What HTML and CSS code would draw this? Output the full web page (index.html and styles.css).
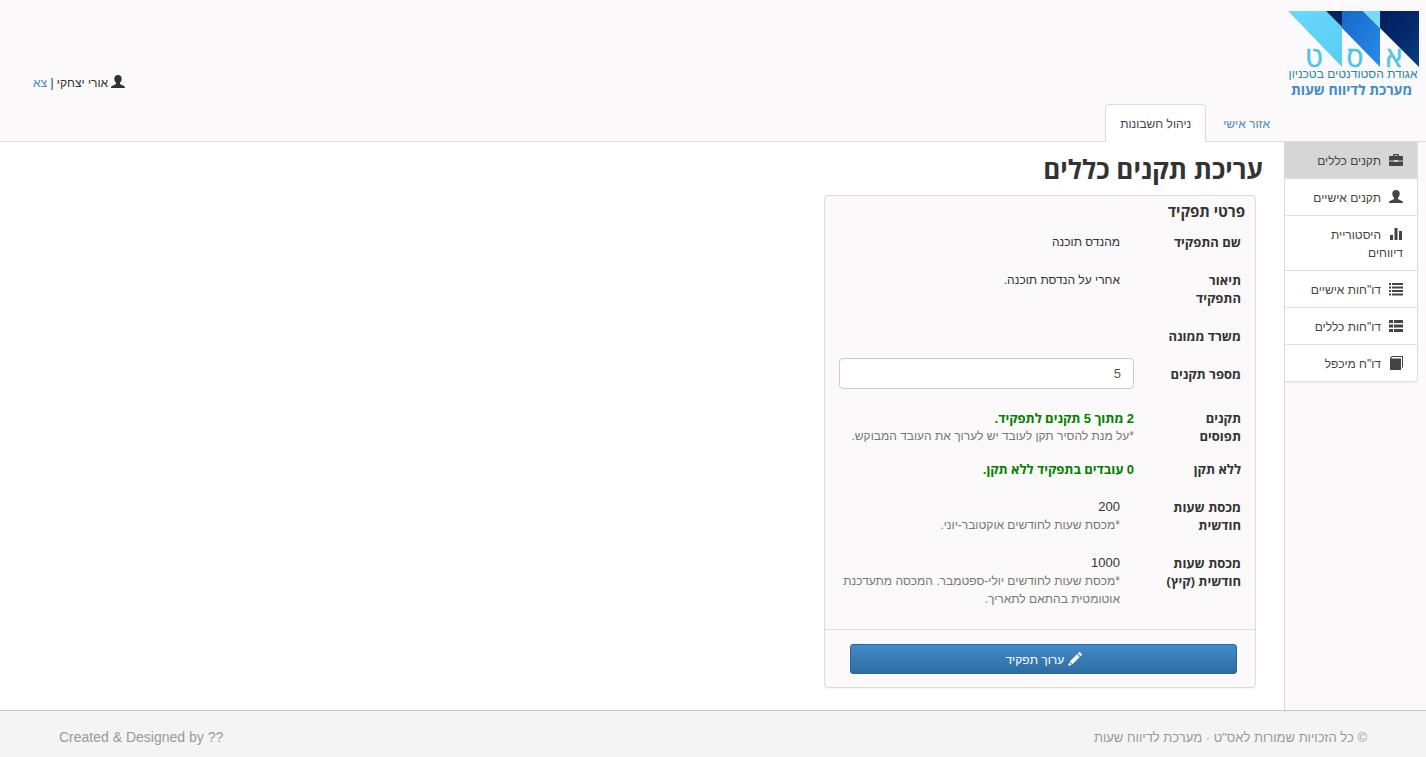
FILE: index.html
```
<!DOCTYPE html>
<html lang="he" dir="rtl">
<head>
<meta charset="utf-8">
<meta name="viewport" content="width=device-width, initial-scale=1">
<title>מערכת לדיווח שעות</title>
<link rel="stylesheet" href="styles.css">
</head>
<body>
<svg class="sprite" aria-hidden="true">
  <symbol id="i-user" viewBox="0 0 14 14"><path d="M7 0c2.200 0 3.700 1.300 3.700 3.500 0 1.900-.8 3.300-1.700 4.200v1.200c0 .5 5 1.600 5 3.300V13H0v-.8c0-1.700 5-2.800 5-3.300V7.700C4.100 6.800 3.300 5.400 3.300 3.500 3.300 1.300 4.800 0 7 0z"/></symbol>
  <symbol id="i-case" viewBox="0 0 14 14"><path d="M5 1h4q1 0 1 1v1h3q1 0 1 1v3.500H9V7H5v.5H0V4q0-1 1-1h3V2q0-1 1-1zm.3 1.200V3h3.400v-.8zM0 8.500h5V9h4v-.5h5V12q0 1-1 1H1q-1 0-1-1z"/></symbol>
  <symbol id="i-stats" viewBox="0 0 14 14"><path d="M1 8h3v5H1zM5.500 1h3v12h-3zM10 4h3v9h-3z"/></symbol>
  <symbol id="i-list" viewBox="0 0 14 14"><path d="M0 1h2v2H0zM3 1h11v2H3zM0 4.500h2v2H0zM3 4.500h11v2H3zM0 8h2v2H0zM3 8h11v2H3zM0 11.500h2v2H0zM3 11.500h11v2H3z"/></symbol>
  <symbol id="i-thlist" viewBox="0 0 14 14"><path d="M0 1h4v3H0zM5 1h9v3H5zM0 5.500h4v3H0zM5 5.500h9v3H5zM0 10h4v3H0zM5 10h9v3H5z"/></symbol>
  <symbol id="i-book" viewBox="0 0 14 14"><path d="M3 0h11v11.500h-1V1H3.500L2 2.500h10V14H1V2z"/></symbol>
  <symbol id="i-pencil" viewBox="0 0 14 14"><path d="M11 .3q.5-.5 1 0l1.700 1.700q.5.500 0 1L12.500 4.200 9.800 1.500zM9 2.300 11.700 5 4.500 12.200 1.800 9.500zM1.300 10.200l2.500 2.500L0 14z"/></symbol>
</svg>

<header class="top">
  <a class="brand" href="#">
    <svg class="brand-mark" viewBox="0 0 131 68" role="img" aria-label="אגודת הסטודנטים בטכניון">
      <defs>
        <linearGradient id="sky" x1="0" y1="0" x2="1" y2="1"><stop offset="0" stop-color="#6ad8fb"/><stop offset="1" stop-color="#57cdf3"/></linearGradient>
        <linearGradient id="mid" x1="0" y1="0" x2="1" y2="1"><stop offset="0" stop-color="#1668cc"/><stop offset="1" stop-color="#2a8be8"/></linearGradient>
        <linearGradient id="navy" x1="0" y1="0" x2="1" y2="1"><stop offset="0" stop-color="#00205c"/><stop offset=".5" stop-color="#04286c"/><stop offset="1" stop-color="#0a3f7c"/></linearGradient>
      </defs>
      <path fill="url(#sky)" d="M0 0h38l16 16v40z"/>
      <path fill="#03245f" d="M38 0h16v16z"/>
      <path fill="url(#mid)" d="M54 0h21l17 17v39L54 17z"/>
      <path fill="#78dcf8" d="M75 0h17v17z"/>
      <path fill="url(#navy)" d="M92 0h39v56L92 17z"/>
      <g class="brand-letters"><text x="106" y="56">א</text><text x="67" y="56">ס</text><text x="26" y="56">ט</text></g>
      <text class="brand-name" x="65" y="67">אגודת הסטודנטים בטכניון</text>
    </svg>
    <span class="brand-title">מערכת לדיווח שעות</span>
  </a>
  <nav class="tabs">
    <a class="tab" href="#">אזור אישי</a>
    <a class="tab tab-active" href="#">ניהול חשבונות</a>
  </nav>
  <div class="user"><svg class="icon"><use href="#i-user"/></svg> אורי יצחקי | <a href="#">צא</a></div>
</header>

<div class="page">
  <aside class="side">
    <nav class="menu">
      <a class="menu-item menu-active" href="#"><svg class="icon"><use href="#i-case"/></svg>תקנים כללים</a>
      <a class="menu-item" href="#"><svg class="icon"><use href="#i-user"/></svg>תקנים אישיים</a>
      <a class="menu-item" href="#"><svg class="icon"><use href="#i-stats"/></svg>היסטוריית דיווחים</a>
      <a class="menu-item" href="#"><svg class="icon"><use href="#i-list"/></svg>דו"חות אישיים</a>
      <a class="menu-item" href="#"><svg class="icon"><use href="#i-thlist"/></svg>דו"חות כללים</a>
      <a class="menu-item" href="#"><svg class="icon"><use href="#i-book"/></svg>דו"ח מיכפל</a>
    </nav>
  </aside>
  <main class="main">
    <h1>עריכת תקנים כללים</h1>
    <form class="panel">
      <div class="panel-body">
        <h2>פרטי תפקיד</h2>
        <div class="row"><span class="label">שם התפקיד</span><p class="value">מהנדס תוכנה</p></div>
        <div class="row"><span class="label">תיאור התפקיד</span><p class="value">אחרי על הנדסת תוכנה.</p></div>
        <div class="row"><span class="label">משרד ממונה</span><p class="value"></p></div>
        <div class="row"><label class="label" for="slots">מספר תקנים</label><input class="field" id="slots" type="text" value="5"></div>
        <div class="row row-tight"><span class="label">תקנים תפוסים</span><p class="value value-wide"><strong><span class="num">2</span> מתוך <span class="num">5</span> תקנים לתפקיד.</strong><small>*על מנת להסיר תקן לעובד יש לערוך את העובד המבוקש.</small></p></div>
        <div class="row"><span class="label">ללא תקן</span><p class="value value-wide"><strong><span class="num">0</span> עובדים בתפקיד ללא תקן.</strong></p></div>
        <div class="row"><span class="label">מכסת שעות חודשית</span><p class="value"><span class="num">200</span><small>*מכסת שעות לחודשים אוקטובר-יוני.</small></p></div>
        <div class="row"><span class="label">מכסת שעות חודשית (קיץ)</span><p class="value"><span class="num">1000</span><small>*מכסת שעות לחודשים יולי-ספטמבר. המכסה מתעדכנת אוטומטית בהתאם לתאריך.</small></p></div>
      </div>
      <div class="panel-foot">
        <button class="button" type="button"><svg class="icon"><use href="#i-pencil"/></svg> ערוך תפקיד</button>
      </div>
    </form>
  </main>
</div>

<footer class="foot">
  <span>© כל הזכויות שמורות לאס"ט · מערכת לדיווח שעות</span>
  <span class="credit" dir="ltr">Created &amp; Designed by ??</span>
</footer>
</body>
</html>
```
FILE: styles.css
```
* { box-sizing: border-box; }
body {
  display: flex;
  flex-direction: column;
  min-height: 100vh;
  margin: 0;
  background: #fff;
  color: #333;
  font: 12px/18px "Liberation Sans", sans-serif;
}
a { color: #428bca; text-decoration: none; }
h1, h2, p { margin: 0; }
h1, h2, strong, .label, .brand-title { font-family: "Open Sans", sans-serif; }
.sprite { display: none; }
.icon { width: 14px; height: 14px; fill: currentColor; vertical-align: -2px; }
.num { font-family: "Liberation Sans", sans-serif; font-size: 13px; line-height: 1; }

.top {
  display: flex;
  min-height: 142px;
  background: #fbf9fa;
  border-bottom: 1px solid #ddd;
}
.brand {
  display: flex;
  flex-direction: column;
  width: 142px;
  padding: 11px 7px 0 4px;
  text-align: center;
}
.brand-mark { width: 131px; height: 68px; overflow: visible; }
.brand-letters {
  fill: #4cc6e6;
  stroke: #4cc6e6;
  stroke-width: .5;
  font: 28px "Open Sans", sans-serif;
  text-anchor: middle;
}
.brand-name { fill: #2b86a8; font-size: 12px; text-anchor: middle; }
.brand-title { padding-right: 4px; font-size: 14px; font-weight: bold; line-height: 22px; }

.tabs { display: flex; align-items: flex-end; gap: 2px; margin-bottom: -1px; }
.tab {
  padding: 10px 14px 9px;
  border: 1px solid transparent;
  border-bottom: 0;
  border-radius: 4px 4px 0 0;
}
.tab:first-child { padding-right: 13px; }
.tab-active { background: #fff; border-color: #ddd; color: #444; }
.user { margin: 74px auto 0 33px; }

.page { display: flex; flex: 1; }
.side {
  flex: none;
  width: 142px;
  padding-right: 8px;
  background: #fbf9fa;
  border-left: 1px solid #ddd;
}
.menu {
  margin-top: -1px;
  border: 1px solid #ddd;
  border-left: 0;
  border-radius: 0 4px 4px 0;
  box-shadow: 0 1px 2px rgba(0, 0, 0, .06);
  background: #fff;
}
.menu-item { display: block; padding: 10px 14px 8px; color: #444; }
.menu-item + .menu-item { border-top: 1px solid #ddd; }
.menu-item .icon { margin-left: 8px; }
.menu-active { background: #d6d6d6; }

.main { flex: 1; padding: 9px 21px 21px; }
h1 { margin-bottom: 8px; font-size: 26px; line-height: 36px; }
.panel {
  width: 432px;
  max-width: 100%;
  margin-right: 7px;
  border: 1px solid #ddd;
  border-radius: 4px;
  background: #fbf9fa;
  box-shadow: 0 1px 1px rgba(0, 0, 0, .05);
}
.panel-body { padding: 5px 14px 8px; }
h2 { margin: 0 -4px 5px 0; font-size: 15px; line-height: 20px; }
.row {
  display: grid;
  grid-template-columns: 76px 1fr;
  column-gap: 31px;
  margin-bottom: 13px;
}
.row-tight { margin-bottom: 8px; }
.label { padding-top: 7px; font-size: 13px; font-weight: bold; }
.value { padding: 7px 14px 0 0; }
.value-wide { padding-right: 0; }
strong { display: block; color: #008000; font-size: 13px; }
small { display: block; color: #777; font-size: 12px; }
.field {
  width: 100%;
  height: 31px;
  padding: 4px 12px;
  border: 1px solid #ccc;
  border-radius: 4px;
  background: #fff;
  color: #555;
  font: 13px "Liberation Sans", sans-serif;
}
.panel-foot { padding: 14px 18px 13px 25px; border-top: 1px solid #ddd; }
.button {
  display: block;
  width: 100%;
  height: 30px;
  padding: 0;
  border: 1px solid #2b669a;
  border-radius: 3px;
  background: linear-gradient(#428bca, #2d6ca2);
  color: #fff;
  font: 12px "Liberation Sans", sans-serif;
}

.foot {
  display: flex;
  justify-content: space-between;
  padding: 17px 59px 10px;
  border-top: 1px solid #c8c8c8;
  background: #f4f4f4;
  color: #999;
  font-size: 13px;
  line-height: 19px;
}
.credit { font-size: 14px; }
```
